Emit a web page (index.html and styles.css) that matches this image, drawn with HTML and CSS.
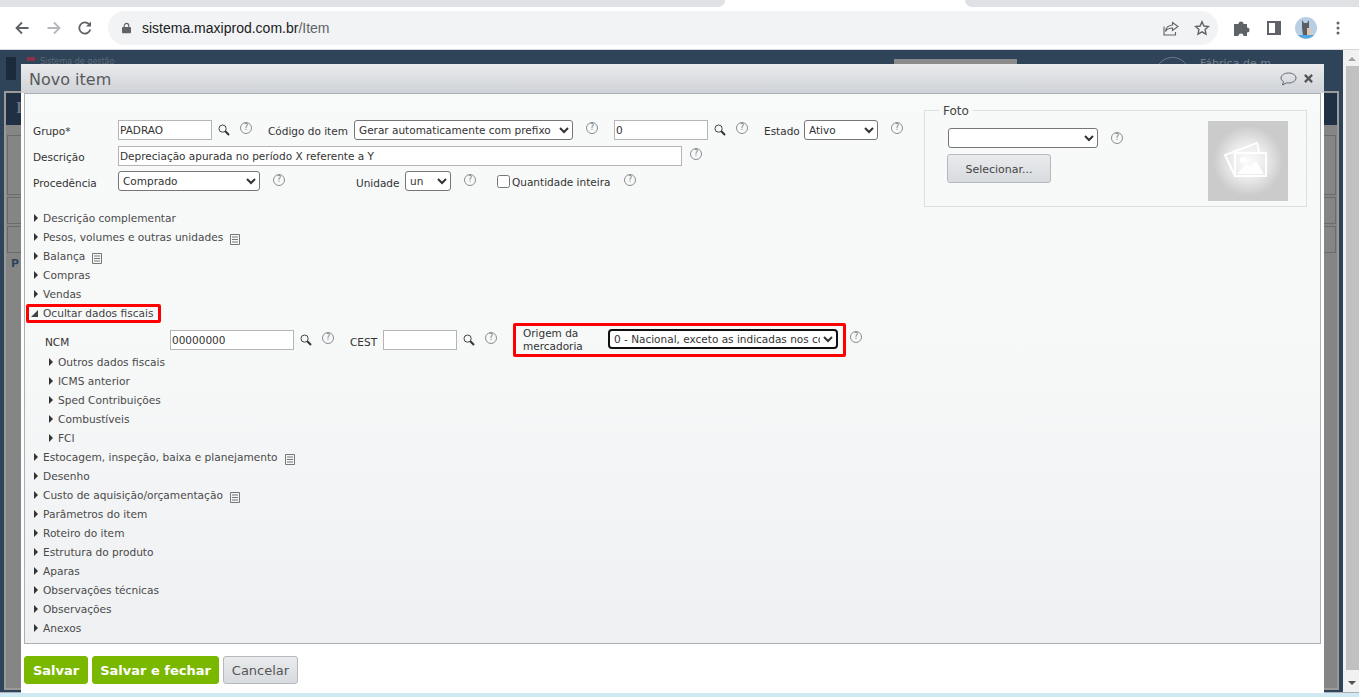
FILE: index.html
```html
<!DOCTYPE html>
<html lang="pt-BR">
<head>
<meta charset="utf-8">
<title>Novo item</title>
<link rel="stylesheet" href="styles.css">
</head>
<body>
<svg class="defs" width="0" height="0" aria-hidden="true">
  <symbol id="s" viewBox="0 0 12 12"><circle cx="4.6" cy="4.6" r="3.6" fill="none" stroke="#444" stroke-width="1"/><path d="M7.3 7.3 11 11" stroke="#333" stroke-width="2"/></symbol>
  <symbol id="d" viewBox="0 0 10 11"><path d="M.5.5h9v10h-9z" fill="none" stroke="#777"/><path d="M2 3h6M2 5.5h6M2 8h6" stroke="#777"/></symbol>
</svg>
<div class="tabstrip"><div class="tab-grey left"></div><div class="tab-active"></div><div class="tab-grey right"></div></div>
<div class="toolbar">
  <svg class="tb" viewBox="0 0 16 16"><path d="M14.5 8H2.500M8 2.500 2.500 8 8 13.500" fill="none" stroke="#5f6368" stroke-width="1.800"/></svg>
  <svg class="tb dim" viewBox="0 0 16 16"><path d="M1.500 8h12M8 2.500 13.500 8 8 13.500" fill="none" stroke="#b5b7ba" stroke-width="1.800"/></svg>
  <svg class="tb" viewBox="0 0 16 16"><path d="M13.300 9.500A5.600 5.600 0 1 1 12 4.200" fill="none" stroke="#5f6368" stroke-width="1.800"/><path d="M14 1.500v5H9z" fill="#5f6368"/></svg>
  <div class="omnibox">
    <svg class="lock" viewBox="0 0 10 12"><path d="M2.500 5V3.400a2.500 2.500 0 0 1 5 0V5" fill="none" stroke="#5f6368" stroke-width="1.200"/><rect y="4.800" width="10" height="7" rx="1" fill="#5f6368"/></svg>
    <span class="host">sistema.maxiprod.com.br</span><span class="path">/Item</span>
    <span class="spacer"></span>
    <svg class="omni-ic" viewBox="0 0 16 16"><path d="M9.500 2.500 15 6.500l-5.500 4V8C6 8 4 9 2.500 11.500 3 7.500 5.500 5.300 9.500 5z M1 6.500V15h11.500v-3" fill="none" stroke="#5f6368" stroke-width="1.100"/></svg>
    <svg class="omni-ic star" viewBox="0 0 16 16"><path d="m8 1.800 1.900 4.200 4.600.5-3.400 3.100.9 4.600L8 11.900l-4 2.300.9-4.600L1.500 6.500l4.600-.5z" fill="none" stroke="#5f6368" stroke-width="1.400"/></svg>
  </div>
  <svg class="ext" viewBox="0 0 16 16"><path d="M0 4h4.500a2.500 2.500 0 1 1 5 0H13v3.500a2.500 2.500 0 1 1 0 5V16H9.500a2.500 2.500 0 1 0-5 0H0z" fill="#5f6368"/></svg>
  <svg class="ext side" viewBox="0 0 14 14"><path d="M0 0h14v14H0z" fill="#5f6368"/><path d="M2 2h6v10H2z" fill="#fff"/></svg>
  <svg class="avatar" viewBox="0 0 22 22"><circle cx="11" cy="11" r="11" fill="#b9cfe3"/><path d="M3 18h16a11 11 0 0 1-16 0z" fill="#4fa6e0"/><path d="M7 3l2 3h3l2-3v8l-1 7H8L7 11z" fill="#5a5f66"/><path d="M12 11h4v7h-4z" fill="#dcc9ae"/></svg>
  <svg class="menu" viewBox="0 0 4 14"><circle cx="2" cy="2" r="1.500" fill="#5f6368"/><circle cx="2" cy="7" r="1.500" fill="#5f6368"/><circle cx="2" cy="12" r="1.500" fill="#5f6368"/></svg>
</div>

<div class="viewport">
  <div class="backdrop">
    <div class="bg-main">
      <div class="bg-header">
        <span class="bg-logo"></span>
        <span class="bg-dots"></span>
        <span class="bg-brand">Sistema de gestão</span>
        <span class="bg-bar"></span>
        <span class="bg-circle"></span>
        <span class="bg-company">Fábrica de m</span>
      </div>
      <div class="bg-panel">
        <div class="bg-navy"><span class="bg-letter">I</span></div>
        <div class="bg-box tall"></div>
        <div class="bg-box"></div>
        <div class="bg-box"></div>
        <div class="bg-p">P</div>
      </div>
    </div>
    <div class="scrollbar"><span class="sb-up"></span><span class="sb-thumb"></span><span class="sb-down"></span></div>
  </div>

  <div class="dialog">
    <div class="titlebar">
      <span class="title">Novo item</span>
      <svg class="chat" viewBox="0 0 17 14"><path d="M8.500 1C4.300 1 1 3.200 1 6c0 1.500 1 2.800 2.500 3.600L2.500 13l4-2.100c.7.100 1.300.100 2 .100 4.200 0 7.500-2.200 7.500-5s-3.300-5-7.500-5z" fill="none" stroke="#667" stroke-width="1"/></svg>
      <svg class="close" viewBox="0 0 8 8"><path d="M.8.800l6.400 6.400M7.200.800.800 7.200" stroke="#555" stroke-width="2"/></svg>
    </div>
    <div class="panel">
      <div class="top">
        <div class="fields">
          <div class="row r1">
            <label class="lab w-grupo">Grupo*</label>
            <input class="inp w94" value="PADRAO">
            <svg class="search"><use href="#s"/></svg>
            <span class="help">?</span>
            <label class="lab ml16 w-cod">Código do item</label>
            <select class="sel w219"><option>Gerar automaticamente com prefixo</option></select>
            <span class="help ml13">?</span>
            <input class="inp w94 ml16" value="0">
            <svg class="search"><use href="#s"/></svg>
            <span class="help">?</span>
            <label class="lab ml16 w-est">Estado</label>
            <select class="sel w74"><option>Ativo</option></select>
            <span class="help ml13">?</span>
          </div>
          <div class="row r2">
            <label class="lab w-grupo">Descrição</label>
            <input class="inp w564" value="Depreciação apurada no período X referente a Y">
            <span class="help ml8">?</span>
          </div>
          <div class="row r3">
            <label class="lab w-grupo">Procedência</label>
            <select class="sel w142"><option>Comprado</option></select>
            <span class="help ml13">?</span>
            <label class="lab ml71 w-uni">Unidade</label>
            <select class="sel w46"><option>un</option></select>
            <span class="help ml13">?</span>
            <input type="checkbox" class="chk">
            <label class="lab ml2 w-qt">Quantidade inteira</label>
            <span class="help ml13">?</span>
          </div>
        </div>
        <fieldset class="foto">
          <legend class="foto-legend">Foto</legend>
          <div class="foto-body">
            <div class="foto-left">
              <div class="foto-sel"><select class="sel w150"><option></option></select><span class="help ml13">?</span></div>
              <button class="btn-sel" type="button">Selecionar...</button>
            </div>
            <div class="foto-pic">
              <svg viewBox="0 0 80 80" width="80" height="80"><g fill="none" stroke="#fff" stroke-width="2"><path d="M27 55 17 34l32-12 2 9"/><path d="M27 32h31v23H27z"/></g><circle cx="35" cy="39" r="3" fill="#fff"/><path d="M29 53l9-10 4 3 6-6 8 13z" fill="#fff"/></svg>
            </div>
          </div>
        </fieldset>
      </div>

      <ul class="acc">
        <li class="item"><i class="tri"></i>Descrição complementar</li>
        <li class="item"><i class="tri"></i>Pesos, volumes e outras unidades<svg class="doc"><use href="#d"/></svg></li>
        <li class="item"><i class="tri"></i>Balança<svg class="doc"><use href="#d"/></svg></li>
        <li class="item"><i class="tri"></i>Compras</li>
        <li class="item"><i class="tri"></i>Vendas</li>
        <li class="item open"><span class="redbox"><i class="tri-open"></i>Ocultar dados fiscais</span></li>
      </ul>
      <div class="fiscal">
        <label class="lab w-ncm">NCM</label>
        <input class="inp w124" value="00000000">
        <svg class="search"><use href="#s"/></svg>
        <span class="help">?</span>
        <label class="lab ml16 w-cest">CEST</label>
        <input class="inp w74">
        <svg class="search"><use href="#s"/></svg>
        <span class="help">?</span>
        <div class="origem">
          <label class="lab-origem">Origem da mercadoria</label>
          <select class="sel focus"><option>0 - Nacional, exceto as indicadas nos códigos 3, 4, 5 e 8</option></select>
        </div>
        <span class="help help-origem">?</span>
      </div>
      <ul class="acc sub">
        <li class="item"><i class="tri"></i>Outros dados fiscais</li>
        <li class="item"><i class="tri"></i>ICMS anterior</li>
        <li class="item"><i class="tri"></i>Sped Contribuições</li>
        <li class="item"><i class="tri"></i>Combustíveis</li>
        <li class="item"><i class="tri"></i>FCI</li>
      </ul>
      <ul class="acc">
        <li class="item"><i class="tri"></i>Estocagem, inspeção, baixa e planejamento<svg class="doc"><use href="#d"/></svg></li>
        <li class="item"><i class="tri"></i>Desenho</li>
        <li class="item"><i class="tri"></i>Custo de aquisição/orçamentação<svg class="doc"><use href="#d"/></svg></li>
        <li class="item"><i class="tri"></i>Parâmetros do item</li>
        <li class="item"><i class="tri"></i>Roteiro do item</li>
        <li class="item"><i class="tri"></i>Estrutura do produto</li>
        <li class="item"><i class="tri"></i>Aparas</li>
        <li class="item"><i class="tri"></i>Observações técnicas</li>
        <li class="item"><i class="tri"></i>Observações</li>
        <li class="item"><i class="tri"></i>Anexos</li>
      </ul>
    </div>
    <div class="actions">
      <button class="btn green w64" type="button">Salvar</button>
      <button class="btn green w127" type="button">Salvar e fechar</button>
      <button class="btn grey" type="button">Cancelar</button>
    </div>
  </div>
</div>
</body>
</html>
```
FILE: styles.css
```css
* { box-sizing: border-box; }
html, body { margin: 0; padding: 0; height: 100%; overflow: hidden; }
body { width: 1359px; height: 697px; background: #fff; font-family: "DejaVu Sans", Verdana, sans-serif; font-size: 10.5px; color: #333; }
.defs { position: absolute; }

.tabstrip { height: 7px; background: #fff; display: flex; }
.tab-grey { height: 7px; background: #dfe1e5; }
.tab-grey.left { width: 725px; border-bottom-right-radius: 8px; }
.tab-grey.right { flex: 1; border-bottom-left-radius: 8px; }
.tab-active { width: 240px; height: 7px; background: #fff; }
.toolbar { height: 43px; background: #fff; display: flex; align-items: center; padding: 0 0 0 14px; border-bottom: 1px solid #d5d7db; }
.tb { width: 16px; height: 16px; margin-right: 16px; }
.tb.dim { margin-right: 15px; }
.omnibox { width: 1110px; height: 34px; margin-left: -1px; background: #f1f3f4; border-radius: 17px; display: flex; align-items: center; padding: 0 0 0 14px; font-family: "Liberation Sans", Arial, sans-serif; font-size: 14px; }
.lock { width: 9px; height: 12px; margin-right: 11px; }
.host { color: #202124; }
.path { color: #5f6368; }
.spacer { flex: 1; }
.omni-ic { width: 16px; height: 16px; margin-right: 15px; }
.omni-ic.star { margin-right: 8px; }
.ext { width: 16px; height: 16px; margin-left: 16px; }
.ext.side { width: 14px; height: 14px; margin-left: 17px; }
.avatar { width: 22px; height: 22px; margin-left: 14px; }
.menu { width: 4px; height: 14px; margin-left: 19px; }

.viewport { position: relative; height: 647px; overflow: hidden; background: #cfeaf5; }
.backdrop { display: flex; height: 643px; border-bottom: 1px solid #aab0b6; }
.bg-main { width: 1343px; flex: none; background: #2f4359; padding-left: 4px; }
.bg-header { height: 41px; display: flex; align-items: flex-start; color: #5f6b78; font-size: 8px; padding-top: 7px; }
.bg-logo { width: 10px; height: 23px; margin-left: 2px; background: #1b2a3c; flex: none; }
.bg-dots { width: 8px; height: 4px; margin: 0 5px 0 11px; background: #8e3048; flex: none; }
.bg-brand { width: 854px; flex: none; }
.bg-bar { width: 123px; height: 5px; margin-top: 2px; background: #8b8b8b; flex: none; }
.bg-circle { width: 35px; height: 35px; margin-left: 138px; border: 1px solid #6f7b88; border-radius: 50%; flex: none; }
.bg-company { margin-left: 10px; font-size: 11px; color: #78818c; }
.bg-panel { width: 1335px; height: 599px; border: 2px solid #9a9a9a; background: #858585; display: flex; flex-direction: column; }
.bg-navy { height: 32px; background: #1f2f44; color: #6d7681; font: 700 16px "Liberation Serif", serif; padding: 6px 0 0 10px; }
.bg-box { height: 27px; border: 1px solid #6b6b6b; margin: 2px 1px 0; }
.bg-box.tall { height: 60px; margin-top: 10px; }
.bg-p { font-weight: 700; font-size: 11px; color: #2f4359; padding: 4px 0 0 5px; }
.scrollbar { flex: 1; background: #f1f1f1; display: flex; flex-direction: column; align-items: center; padding-left: 2px; }
.sb-up { width: 0; height: 0; margin: 7px 0 5px; border: 4px solid transparent; border-top: 0; border-bottom-color: #a3a3a3; }
.sb-thumb { width: 13px; flex: 1; background: #c1c1c1; }
.sb-down { width: 0; height: 0; margin: 11px 0 7px; border: 4px solid transparent; border-bottom: 0; border-top-color: #505050; }

.dialog { position: absolute; left: 21px; top: 14px; width: 1303px; height: 629px; background: #fff; display: flex; flex-direction: column; padding: 0 3px; }
.titlebar { height: 29px; margin: 0 -3px; padding: 0 11px 0 8px; flex: none; background: linear-gradient(#e9ebed, #cfd2d6); display: flex; align-items: center; }
.title { font-size: 16px; color: #5a5a5a; flex: 1; padding-top: 2px; }
.chat { width: 17px; height: 14px; margin-right: 7px; }
.close { width: 9px; height: 9px; }

.panel { height: 551px; flex: none; border: 1px solid #aab0b6; background: linear-gradient(#f8f9f9 0, #f7f8f8 45%, #eff0f2 100%); padding: 26px 0 0 0; }
.top { display: flex; height: 89px; padding-left: 8px; }
.fields { width: 891px; flex: none; }
.row { display: flex; align-items: center; height: 20px; }
.r2 { margin-top: 6px; }
.r3 { margin-top: 5px; }
.r3 .help { margin-top: -3px; }
.lab { display: block; color: #333; padding-top: 2px; white-space: nowrap; }
.r3 .lab { padding-top: 3px; }
.r3 .w-qt { padding-top: 1px; }
.fiscal .lab { padding-top: 3px; }
.w-grupo { width: 85px; }
.w-cod { width: 86px; }
.w-est { width: 40px; }
.w-uni { width: 49px; }
.w-qt { width: 99px; }
.w-ncm { width: 137px; padding-left: 12px; }
.w-cest { width: 33px; }
.ml2 { margin-left: 2px; }
.ml16 { margin-left: 16px; }
.ml71 { margin-left: 71px; }
.inp { height: 20px; border: 1px solid #b5b5b5; background: #fff; padding: 0 1px; font: inherit; color: #333; outline: 0; }
.w94 { width: 94px; }
.w564 { width: 564px; }
.w124 { width: 124px; }
.w74 { width: 74px; }
.sel { height: 20px; border: 1px solid #767676; border-radius: 3px; background: #fff; font: inherit; color: #333; padding: 0; }
.w219 { width: 219px; }
.w142 { width: 142px; }
.w46 { width: 46px; }
.w150 { width: 150px; }
.search { width: 12px; height: 12px; margin-left: 6px; flex: none; }
.help { width: 12px; height: 12px; flex: none; margin-left: 10px; margin-top: -4px; border: 1px solid #8a8f95; border-radius: 50%; font-size: 8px; line-height: 10px; text-align: center; color: #777; background: transparent; }
.help.ml13 { margin-left: 13px; }
.help.ml8 { margin-left: 8px; }
.chk { width: 13px; height: 13px; margin: 0 0 0 21px; }

.foto { width: 383px; height: 105px; margin: -18px 0 0 0; padding: 0; border: 1px solid #dcdfe0; min-width: 0; flex: none; }
.foto-legend { margin-left: 14px; padding: 2px 4px 0; font-size: 12px; color: #444; line-height: 14px; }
.foto-body { display: flex; justify-content: space-between; padding: 0 18px 0 23px; }
.foto-left { display: flex; flex-direction: column; align-items: flex-start; }
.foto-sel { display: flex; align-items: center; height: 20px; margin-top: 10px; }
.foto-sel .help { margin-top: 0; }
.btn-sel { width: 104px; height: 29px; margin: 6px 0 0 -1px; padding: 2px 0 0; border: 1px solid #b5b9be; border-radius: 3px; background: linear-gradient(#e9ebed, #d8dbdf); font: inherit; font-size: 11px; color: #444; }
.foto-pic { width: 80px; height: 80px; margin-top: 3px; background: radial-gradient(circle, #fcfcfc 0, #ececec 30%, #cbcbcb 62%); }
.foto-pic svg { display: block; }

.acc { list-style: none; margin: 0; padding: 0 0 0 9px; }
.item { height: 19px; line-height: 19px; font-size: 10.6px; color: #4a4a4a; white-space: nowrap; display: flex; align-items: center; }
.tri { width: 0; height: 0; margin-right: 5px; border-left: 4px solid #333; border-top: 4px solid transparent; border-bottom: 4px solid transparent; margin-top: -1px; flex: none; }
.tri-open { width: 0; height: 0; position: absolute; left: 2px; top: 3px; border-left: 7px solid transparent; border-bottom: 7px solid #444; }
.doc { width: 10px; height: 11px; margin-left: 7px; margin-top: 3px; flex: none; }
.redbox { position: relative; margin-left: -8px; height: 19px; padding: 0 0 0 14px; border: 3px solid #f00; border-radius: 2px; line-height: 13px; display: block; width: 135px; color: #444; }
.sub { padding-left: 24px; }
.fiscal { display: flex; align-items: center; height: 30px; padding-left: 8px; margin: 2px 0 -2px; }
.fiscal .help { margin-top: -4px; }
.origem { display: flex; align-items: center; width: 333px; height: 34px; margin-left: 16px; padding: 0 6px 0 7px; border: 3px solid #f00; border-radius: 2px; flex: none; }
.lab-origem { width: 85px; line-height: 13px; color: #333; flex: none; }
.sel.focus { width: 230px; margin-top: -3px; border: 2px solid #101010; border-radius: 4px; }
.help.help-origem { margin-left: 4px; margin-top: -6px; }

.actions { display: flex; gap: 4px; padding-top: 12px; }
.btn { height: 28px; border-radius: 3px; cursor: default; font-family: inherit; padding: 0; }
.green { background: #7ab800; border: 1px solid #7ab800; color: #fff; font-weight: 700; font-size: 13px; }
.w64 { width: 64px; }
.w127 { width: 127px; }
.grey { width: 75px; background: linear-gradient(#e9ebed, #d8dbdf); border: 1px solid #b5b9be; color: #555; font-size: 13px; }
```
